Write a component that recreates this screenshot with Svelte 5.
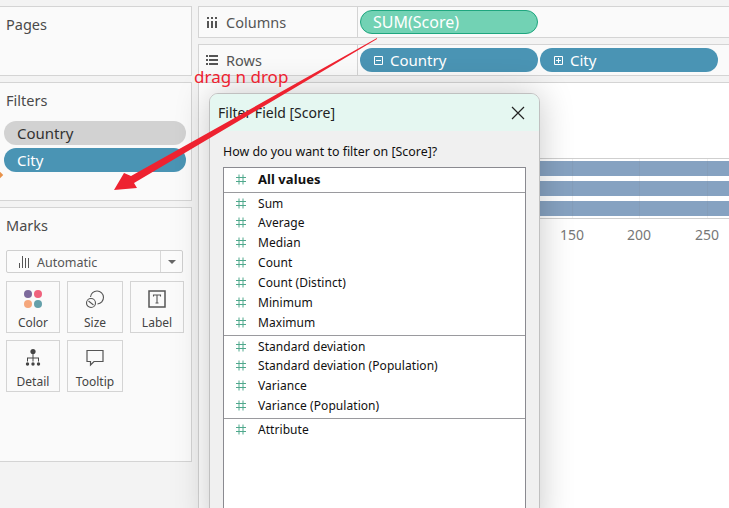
<script lang="ts">
	const groups = [
		['All values'],
		['Sum', 'Average', 'Median', 'Count', 'Count (Distinct)', 'Minimum', 'Maximum'],
		['Standard deviation', 'Standard deviation (Population)', 'Variance', 'Variance (Population)'],
		['Attribute']
	];
</script>

{#snippet hash()}
	<svg class="hash" width="10" height="11" viewBox="0 0 10 11" fill="none" stroke="#4fa88c" stroke-width="1">
		<path d="M3 0.5v10M7 0.5v10M0 3.5h10M0 7.5h10" />
	</svg>
{/snippet}

<div class="page">
	<aside class="side">
		<section class="card pages"><h3>Pages</h3></section>
		<section class="card filters">
			<h3>Filters</h3>
			<div class="filter-pills">
				<div class="fpill grey">Country</div>
				<div class="fpill blue">City</div>
			</div>
		</section>
		<section class="card marks">
			<h3>Marks</h3>
			<div class="select">
				<svg width="12" height="12" viewBox="0 0 12 12" stroke="#555" stroke-width="1">
					<path d="M1.5 12V7M4.5 12V0M7.5 12V2M10.5 12V2" />
				</svg>
				<span class="select-label">Automatic</span>
				<span class="select-arrow"></span>
			</div>
			<div class="mark-grid">
				<div class="mark">
					<svg width="20" height="20" viewBox="0 0 20 20">
						<circle cx="5" cy="5" r="4" fill="#7d6a9c" />
						<circle cx="15" cy="5" r="4" fill="#f0627d" />
						<circle cx="5" cy="15" r="4" fill="#f5a77c" />
						<circle cx="15" cy="15" r="4" fill="#64a0aa" />
					</svg>
					<span>Color</span>
				</div>
				<div class="mark">
					<svg width="20" height="20" viewBox="0 0 20 20" fill="none" stroke="#555" stroke-width="1.1">
						<path d="M5.5 8A6.5 6.5 0 1 1 12.5 15" />
						<circle cx="6" cy="14" r="4.5" />
						<path d="M3.5 12L8.5 16" />
					</svg>
					<span>Size</span>
				</div>
				<div class="mark">
					<svg width="18" height="18" viewBox="0 0 18 18" fill="none" stroke="#555">
						<rect x="1" y="1" width="16" height="16" stroke-width="1.5" />
						<path d="M5.5 6.5V5h7v1.5M9 5v8M7.5 13h3" stroke-width="1.1" />
					</svg>
					<span>Label</span>
				</div>
				<div class="mark">
					<svg width="18" height="19" viewBox="0 0 18 19" fill="#444" stroke="none">
						<circle cx="9" cy="3" r="2.6" />
						<path d="M8.5 5h1v4h5.5v4h-1v-3H9.5v3h-1v-3H4v3H3V9h5.5z" />
						<circle cx="3.5" cy="15.5" r="1.7" />
						<circle cx="9" cy="15.5" r="1.7" />
						<circle cx="14.5" cy="15.5" r="1.7" />
					</svg>
					<span>Detail</span>
				</div>
				<div class="mark">
					<svg width="18" height="17" viewBox="0 0 18 17" fill="none" stroke="#555" stroke-width="1.2">
						<path d="M1 1h16v11H8l-3.5 3.5V12H1z" />
					</svg>
					<span>Tooltip</span>
				</div>
			</div>
		</section>
	</aside>

	<main class="main">
		<div class="shelf">
			<div class="shelf-label">
				<svg class="cols-icon" width="10" height="11" viewBox="0 0 10 11" fill="#555"><path d="M0 4h2v7H0zM4 4h2v7H4zM8 4h2v7H8zM0 0h2v2H0zM4 0h2v2H4zM8 0h2v2H8z" /></svg>
				<span>Columns</span>
			</div>
			<div class="pills"><div class="pill green">SUM(Score)</div></div>
		</div>
		<div class="shelf">
			<div class="shelf-label">
				<svg width="12" height="10" viewBox="0 0 12 10" fill="#555"><path d="M0 0h2v2H0zM3 0h9v2H3zM0 4h2v2H0zM3 4h9v2H3zM0 8h2v2H0zM3 8h9v2H3z" /></svg>
				<span>Rows</span>
			</div>
			<div class="pills">
				<div class="pill blue">
					<svg width="9" height="9" viewBox="0 0 9 9" fill="none" stroke="#fff"><path d="M.5.5h8v8h-8zM2 4.5h5" /></svg>
					Country
				</div>
				<div class="pill blue">
					<svg width="9" height="9" viewBox="0 0 9 9" fill="none" stroke="#fff"><path d="M.5.5h8v8h-8zM2 4.5h5M4.5 2v5" /></svg>
					City
				</div>
			</div>
		</div>
		<div class="chart">
			<div class="plot">
				<div class="bar"></div>
				<div class="bar"></div>
				<div class="bar"></div>
				<i class="grid g1"></i>
				<i class="grid g2"></i>
				<i class="grid g3"></i>
			</div>
			<div class="axis">
				<span class="t1">150</span>
				<span class="t2">200</span>
				<span class="t3">250</span>
			</div>
		</div>
	</main>

	<div class="modal">
		<header>
			<span>Filter Field [Score]</span>
			<svg width="14" height="14" viewBox="0 0 14 14" stroke="#222" stroke-width="1.2"><path d="M1 1l12 12M13 1L1 13" /></svg>
		</header>
		<div class="modal-body">
			<p>How do you want to filter on [Score]?</p>
			<div class="list">
				{#each groups as group, gi (gi)}
					<ul class:first={gi === 0}>
						{#each group as item (item)}
							<li>{@render hash()}<span>{item}</span></li>
						{/each}
					</ul>
				{/each}
			</div>
		</div>
	</div>

	<!-- red annotation over the screenshot -->
	<span class="note">drag n drop</span>
	<svg class="arrow" width="729" height="508" viewBox="0 0 729 508">
		<path d="M377 38L131 176L124 173L114 190L137 188L134 183L377 39z" fill="#ee2230" />
	</svg>
	<i class="diamond"></i>
</div>

<style>
	:global(body) {
		margin: 0;
		background: #f3f3f3;
	}
	.page {
		position: relative;
		width: 729px;
		height: 508px;
		overflow: hidden;
		background: #f3f3f3;
		display: flex;
		gap: 6px;
		padding-top: 6px;
		box-sizing: border-box;
		font-family: 'Noto Sans', sans-serif;
		color: #333;
	}
	.side {
		width: 192px;
		flex: none;
		display: flex;
		flex-direction: column;
		gap: 6px;
		height: 456px;
	}
	.card {
		background: #fafafa;
		border: 1px solid #d4d4d4;
		border-left: 0;
		box-sizing: border-box;
		padding: 7px 6px;
	}
	h3 {
		margin: 0;
		font-size: 14.5px;
		font-weight: 400;
		line-height: 20px;
		color: #4a4a4a;
	}
	.pages {
		height: 70px;
	}
	.filters {
		height: 119px;
	}
	.marks {
		flex: 1;
	}
	.filter-pills {
		margin: 11px 0 0 -2px;
		display: flex;
		flex-direction: column;
		gap: 3px;
	}
	.fpill {
		width: 182px;
		height: 24px;
		border-radius: 12px;
		padding-left: 13px;
		box-sizing: border-box;
		font-size: 15px;
		line-height: 25px;
	}
	.grey {
		background: #d2d2d2;
		color: #333;
	}
	.fpill.blue {
		background: #4a94b4;
		color: #fff;
	}
	.select {
		margin-top: 15px;
		width: 177px;
		height: 23px;
		box-sizing: border-box;
		border: 1px solid #cfcfcf;
		border-radius: 2px;
		background: #fbfbfb;
		display: flex;
		align-items: center;
		padding-left: 11px;
		gap: 7px;
		position: relative;
		font-size: 12.5px;
		color: #555;
	}
	.select-label {
		flex: 1;
		padding-top: 2px;
	}
	.select-arrow {
		width: 21px;
		height: 100%;
		border-left: 1px solid #d8d8d8;
		position: relative;
	}
	.select-arrow::after {
		content: '';
		position: absolute;
		left: 7px;
		top: 9px;
		border: 4px solid transparent;
		border-top: 4px solid #666;
		border-bottom: 0;
	}
	.mark-grid {
		margin-top: 8px;
		display: grid;
		grid-template-columns: 54px 56px 54px;
		column-gap: 7px;
		row-gap: 7px;
		width: 177px;
	}
	.mark {
		height: 52px;
		box-sizing: border-box;
		border: 1px solid #d4d4d4;
		display: flex;
		flex-direction: column;
		align-items: center;
		padding-top: 7px;
		font-size: 12px;
		color: #444;
	}
	.mark svg {
		height: 20px;
		flex: none;
	}
	.mark span {
		margin-top: 6px;
		line-height: 16px;
	}
	.main {
		flex: 1;
		display: flex;
		flex-direction: column;
		gap: 6px;
		min-width: 0;
	}
	.shelf {
		height: 32px;
		box-sizing: border-box;
		background: #fafafa;
		border: 1px solid #d4d4d4;
		border-right: 0;
		display: flex;
	}
	.shelf-label {
		width: 159px;
		flex: none;
		box-sizing: border-box;
		border-right: 1px solid #d4d4d4;
		display: flex;
		align-items: center;
		gap: 8px;
		padding-left: 7px;
		font-size: 14.5px;
		line-height: 16px;
		color: #555;
	}
	.cols-icon {
		margin: 0 1px;
	}
	.pills {
		display: flex;
		align-items: center;
		gap: 2px;
		padding-left: 2px;
	}
	.pill {
		width: 178px;
		height: 24px;
		box-sizing: border-box;
		border-radius: 12px;
		color: #fff;
		font-size: 15px;
		display: flex;
		align-items: center;
		gap: 7px;
		padding-left: 14px;
	}
	.pill.green {
		background: #72d2b4;
		border: 1px solid #1fa67f;
		font-size: 16px;
		padding-left: 12px;
	}
	.pill.blue {
		background: #4a94b4;
	}
	.chart {
		flex: 1;
		background: #fff;
		border-top: 1px solid #d4d4d4;
		border-left: 1px solid #d4d4d4;
		margin-bottom: -60px;
		position: relative;
		padding-top: 75px;
	}
	.plot {
		height: 59px;
		margin-left: 160px;
		border-top: 1px solid #cfcfcf;
		border-bottom: 1px solid #cfcfcf;
		display: flex;
		flex-direction: column;
		justify-content: center;
		gap: 5px;
		position: relative;
	}
	.bar {
		height: 15px;
		background: #86a2c1;
	}
	.grid {
		position: absolute;
		top: 0;
		bottom: 0;
		width: 1px;
		background: rgba(120, 120, 120, 0.1);
	}
	.g1 { left: 213px; }
	.g2 { left: 280px; }
	.g3 { left: 348px; }
	.axis {
		position: relative;
		height: 30px;
		font-size: 14px;
		color: #777;
	}
	.axis span {
		position: absolute;
		top: 6px;
		transform: translateX(-50%);
	}
	.t1 { left: 373px; }
	.t2 { left: 440px; }
	.t3 { left: 508px; }
	.modal {
		position: absolute;
		left: 209px;
		top: 93px;
		width: 331px;
		height: 440px;
		box-sizing: border-box;
		border: 1px solid #c0c0c0;
		border-radius: 9px;
		background: #f0f0f0;
		box-shadow: 0 0 34px rgba(0, 0, 0, 0.22);
		overflow: hidden;
	}
	.modal header {
		height: 37px;
		background: #e5f7f1;
		display: flex;
		align-items: center;
		justify-content: space-between;
		padding: 0 14px 0 8px;
		font-size: 14px;
		color: #222;
	}
	.modal-body {
		padding: 0 13px;
	}
	.modal p {
		margin: 13px 0 7px;
		font-size: 12.4px;
		line-height: 16px;
		color: #111;
	}
	.list {
		width: 303px;
		height: 400px;
		box-sizing: border-box;
		background: #fff;
		border: 1px solid #8a8a90;
		font-size: 12px;
		letter-spacing: 0.06px;
		color: #111;
	}
	ul {
		margin: 0;
		padding: 0 0 2px;
		list-style: none;
		border-top: 1px solid #9a9a9e;
	}
	ul.first {
		border-top: 0;
		padding: 1px 0 3px;
	}
	ul.first li {
		font-weight: 700;
		font-size: 13px;
		height: 20px;
		padding-top: 0;
	}
	li {
		height: 20px;
		box-sizing: border-box;
		display: flex;
		align-items: center;
		padding-left: 12px;
		gap: 12px;
	}
	li:first-child {
		height: 19px;
		padding-top: 1px;
	}
	ul:not(.first):not(:last-child) {
		padding-bottom: 3px;
	}
	.hash {
		flex: none;
	}
	.note {
		position: absolute;
		left: 194px;
		top: 68px;
		font-size: 17px;
		line-height: 18px;
		color: #ee2230;
	}
	.arrow {
		position: absolute;
		left: 0;
		top: 0;
		pointer-events: none;
	}
	.diamond {
		position: absolute;
		left: -4px;
		top: 172px;
		width: 6px;
		height: 6px;
		background: #e8924a;
		transform: rotate(45deg);
	}
</style>
